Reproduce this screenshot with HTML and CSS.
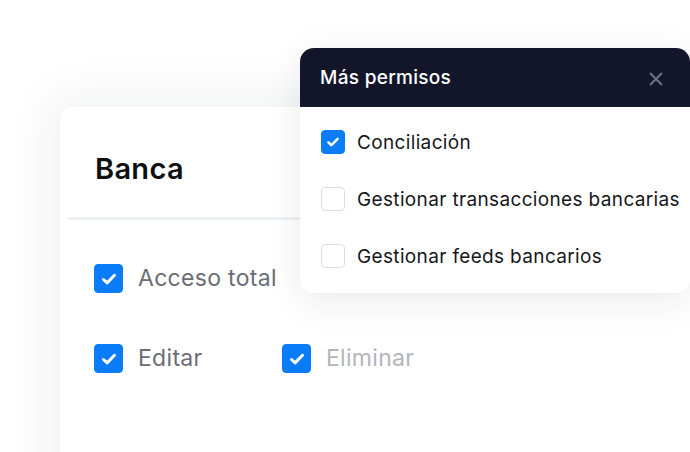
FILE: index.html
```html
<!DOCTYPE html>
<html lang="es">
<head>
<meta charset="utf-8">
<title>Banca</title>
<link rel="stylesheet" href="styles.css">
</head>
<body>
<div class="stage">
  <section class="card">
    <h1 class="card-title">Banca</h1>
    <div class="divider"></div>
    <div class="perms">
      <label class="perm perm-wide"><span class="box box-lg checked"><svg viewBox="0 0 24 24"><path d="M6.5 12.5l3.6 3.4 7.4-7.6"/></svg></span><span class="perm-text">Acceso total</span></label>
      <label class="perm"><span class="box box-lg checked"><svg viewBox="0 0 24 24"><path d="M6.5 12.5l3.6 3.4 7.4-7.6"/></svg></span><span class="perm-text">Editar</span></label>
      <label class="perm"><span class="box box-lg checked"><svg viewBox="0 0 24 24"><path d="M6.5 12.5l3.6 3.4 7.4-7.6"/></svg></span><span class="perm-text muted">Eliminar</span></label>
    </div>
  </section>

  <div class="popup">
    <div class="popup-head">
      <span class="popup-title">Más permisos</span>
      <svg class="close" viewBox="0 0 14 14"><path d="M1 1l12 12M13 1L1 13"/></svg>
    </div>
    <ul class="popup-list">
      <li class="item"><span class="box checked"><svg viewBox="0 0 24 24"><path d="M6.5 12.5l3.6 3.4 7.4-7.6"/></svg></span>Conciliación</li>
      <li class="item"><span class="box"></span>Gestionar transacciones bancarias</li>
      <li class="item"><span class="box"></span>Gestionar feeds bancarios</li>
    </ul>
  </div>
</div>
</body>
</html>
```

FILE: styles.css
```css
* { box-sizing: border-box; }
html, body { margin: 0; padding: 0; background: #ffffff; }
body {
  font-family: Inter, "Noto Sans", "Liberation Sans", sans-serif;
  width: 690px;
  height: 452px;
  overflow: hidden;
}
.stage {
  position: relative;
  width: 690px;
  height: 452px;
  overflow: hidden;
  padding-top: 107px;
  padding-left: 60px;
}
.card {
  width: 720px;
  height: 400px;
  background: #ffffff;
  border-radius: 12px;
  box-shadow: 0 0 44px 14px rgba(20, 30, 40, 0.055);
  padding: 0 8px;
}
.card-title {
  margin: 0;
  padding: 44px 0 0 27px;
  height: 110px;
  font-size: 29px;
  line-height: 36px;
  font-weight: 600;
  color: #0e0f12;
  letter-spacing: 0.3px;
}
.divider {
  height: 3px;
  background: #eff0f2;
}
.perms {
  display: grid;
  grid-template-columns: 188px 1fr;
  row-gap: 51px;
  padding: 44px 0 0 26px;
}
.perm {
  display: flex;
  align-items: center;
  gap: 15px;
}
.perm-wide { grid-column: 1 / -1; }
.perm-text {
  font-size: 23px;
  letter-spacing: 0.3px;
  color: #6a6d75;
  line-height: 29px;
}
.perm-text.muted { color: #b2b5bb; }

.box {
  flex: none;
  width: 24px;
  height: 24px;
  border-radius: 4px;
  border: 1px solid #dcdee3;
  background: #ffffff;
  display: flex;
  align-items: center;
  justify-content: center;
}
.box.checked {
  background: #0b7cf7;
  border-color: #0b7cf7;
}
.box svg {
  width: 20px;
  height: 20px;
  fill: none;
  stroke: #ffffff;
  stroke-width: 3;
  stroke-linecap: round;
  stroke-linejoin: round;
}
.box-lg {
  width: 29px;
  height: 29px;
  border-radius: 4px;
}
.box-lg svg { width: 24px; height: 24px; }

.popup {
  position: absolute;
  left: 300px;
  top: 48px;
  width: 390px;
  height: 245px;
  background: #ffffff;
  border-radius: 14px;
  overflow: hidden;
  box-shadow: 0 8px 36px rgba(20, 30, 40, 0.09);
}
.popup-head {
  height: 59px;
  background: #13162a;
  display: flex;
  align-items: center;
  justify-content: space-between;
  padding: 0 27px 0 20px;
}
.popup-title {
  color: #ffffff;
  font-size: 19px;
  letter-spacing: 0.3px;
  font-weight: 500;
  line-height: 24px;
  padding-top: 1px;
}
.close {
  width: 14px;
  height: 14px;
  margin-top: 2px;
  fill: none;
  stroke: #6e7282;
  stroke-width: 2;
}
.popup-list {
  list-style: none;
  margin: 0;
  padding: 23px 0 0 21px;
  display: flex;
  flex-direction: column;
  gap: 33px;
}
.item {
  display: flex;
  align-items: center;
  gap: 12px;
  height: 24px;
  font-size: 19px;
  letter-spacing: 0.35px;
  color: #15161a;
  white-space: nowrap;
}
```
